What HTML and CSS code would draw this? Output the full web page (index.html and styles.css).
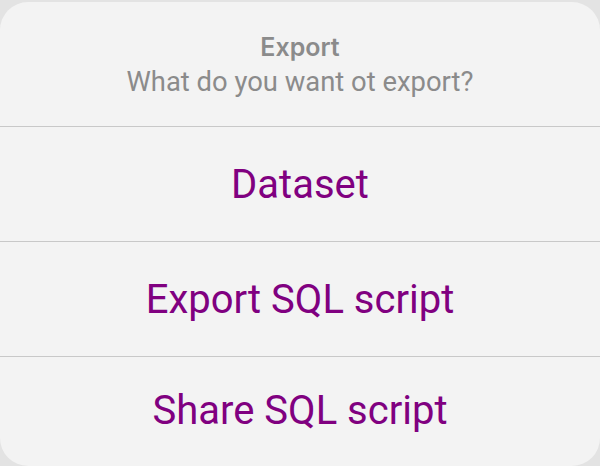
FILE: index.html
```html
<!DOCTYPE html>
<html>
<head>
<meta charset="utf-8">
<link rel="stylesheet" href="styles.css">
</head>
<body>
<div class="sheet">
  <div class="header">
    <div class="title">Export</div>
    <div class="subtitle">What do you want ot export?</div>
  </div>
  <div class="action">Dataset</div>
  <div class="action">Export SQL script</div>
  <div class="action last">Share SQL script</div>
</div>
</body>
</html>
```
FILE: styles.css
```css
html, body {
  margin: 0;
  padding: 0;
  width: 600px;
  height: 466px;
  background: #e3e3e3;
  overflow: hidden;
}
.sheet {
  margin-top: 2px;
  height: 464px;
  background: #f3f3f3;
  border-radius: 28px;
  display: flex;
  flex-direction: column;
  font-family: Roboto, "Liberation Sans", sans-serif;
}
.header {
  height: 125px;
  box-sizing: border-box;
  display: flex;
  flex-direction: column;
  align-items: center;
  justify-content: center;
  gap: 4px;
  border-bottom: 1px solid #c8c8c8;
  color: #8b8b8b;
  padding-top: 2px;
}
.title {
  font-family: Inter, Roboto, sans-serif;
  font-weight: 600;
  font-size: 25px;
  line-height: 30px;
}
.subtitle {
  font-size: 27.4px;
  line-height: 32px;
}
.action {
  height: 114px;
  flex: none;
  display: flex;
  align-items: center;
  justify-content: center;
  color: #800080;
  font-size: 40px;
  border-bottom: 1px solid #c8c8c8;
}
.action.last {
  border-bottom: none;
  flex: 1;
  height: auto;
  padding-bottom: 2px;
}
```
